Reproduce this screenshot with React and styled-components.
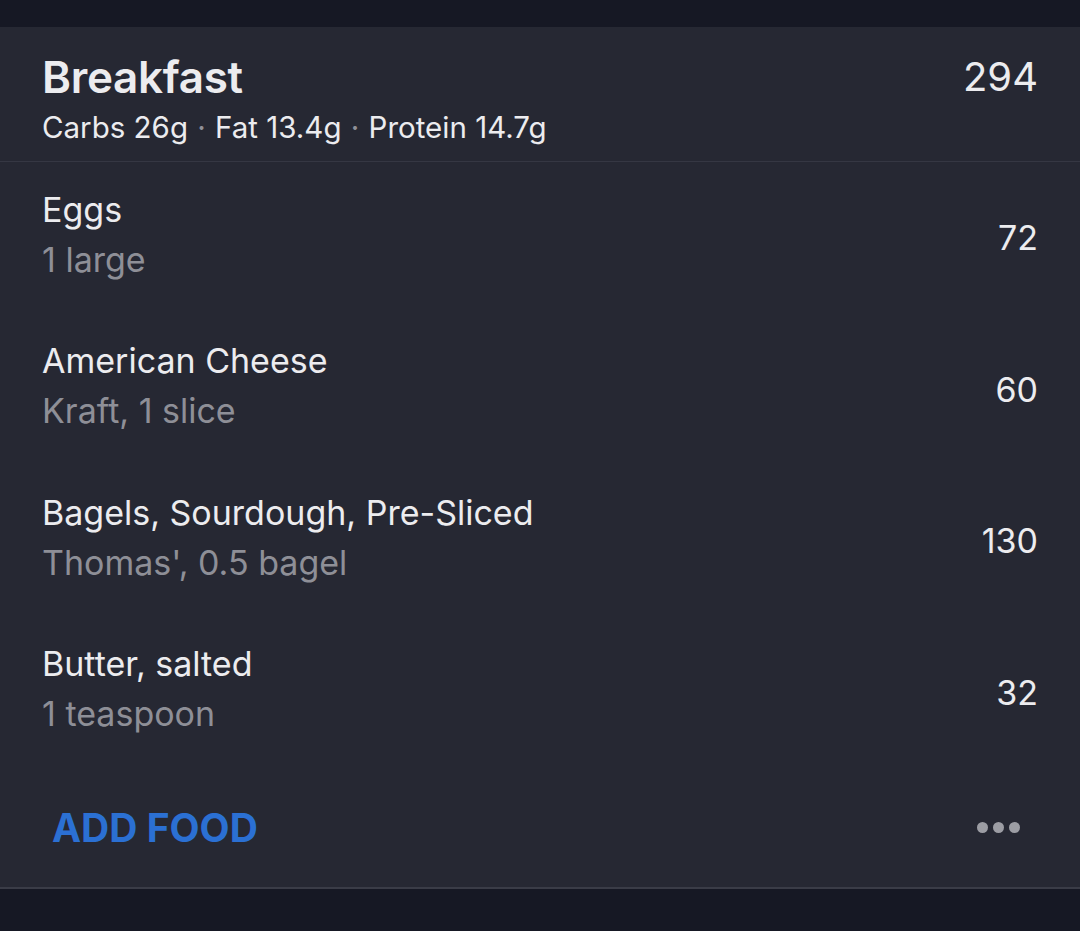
import React from "react";
import styled, { createGlobalStyle } from "styled-components";

const foods = [
  { name: "Eggs", detail: "1 large", cal: 72 },
  { name: "American Cheese", detail: "Kraft, 1 slice", cal: 60 },
  { name: "Bagels, Sourdough, Pre-Sliced", detail: "Thomas', 0.5 bagel", cal: 130 },
  { name: "Butter, salted", detail: "1 teaspoon", cal: 32 },
];

const App = () => {
  return (
    <>
      <GlobalStyle />
      <Page>
        <Card>
          <Header>
            <HeaderText>
              <MealTitle>Breakfast</MealTitle>
              <Macros>
                Carbs 26g <Dot>·</Dot> Fat 13.4g <Dot>·</Dot> Protein 14.7g
              </Macros>
            </HeaderText>
            <MealTotal>294</MealTotal>
          </Header>
          <List>
            {foods.map((f) => (
              <FoodRow key={f.name}>
                <FoodText>
                  <FoodName>{f.name}</FoodName>
                  <FoodDetail>{f.detail}</FoodDetail>
                </FoodText>
                <FoodCal>{f.cal}</FoodCal>
              </FoodRow>
            ))}
          </List>
          <Footer>
            <AddButton>ADD FOOD</AddButton>
            <More aria-label="more">
              <span />
              <span />
              <span />
            </More>
          </Footer>
        </Card>
      </Page>
    </>
  );
};

const GlobalStyle = createGlobalStyle`
  html, body {
    margin: 0;
    padding: 0;
    background: #161824;
  }
  body {
    font-family: Inter, "Liberation Sans", sans-serif;
    -webkit-font-smoothing: antialiased;
  }
`;

const Page = styled.div`
  width: 1080px;
  height: 931px;
  padding-top: 27px;
  box-sizing: border-box;
  background: #161824;
`;

const Card = styled.div`
  background: #262833;
  border-bottom: 2px solid #3a3c47;
`;

const Header = styled.div`
  display: flex;
  justify-content: space-between;
  align-items: flex-start;
  padding: 24px 42px 0 42px;
  height: 135px;
  box-sizing: border-box;
  border-bottom: 1px solid #353743;
`;

const HeaderText = styled.div`
  display: flex;
  flex-direction: column;
`;

const MealTitle = styled.div`
  font-size: 44px;
  font-weight: 600;
  color: #ececef;
  line-height: 52px;
  letter-spacing: -0.3px;
`;

const Macros = styled.div`
  font-size: 29.5px;
  color: #ececef;
  line-height: 48px;
`;

const Dot = styled.span`
  color: #8f9098;
  margin: 0 1px;
`;

const MealTotal = styled.div`
  font-size: 40px;
  color: #ececef;
  line-height: 52px;
`;

const List = styled.div`
  display: flex;
  flex-direction: column;
`;

const FoodRow = styled.div`
  display: flex;
  align-items: center;
  justify-content: space-between;
  height: 151.5px;
  padding: 0 42px;
  box-sizing: border-box;
`;

const FoodText = styled.div`
  display: flex;
  flex-direction: column;
  padding-bottom: 6px;
`;

const FoodName = styled.div`
  font-size: 34px;
  color: #ececef;
  line-height: 50px;
`;

const FoodDetail = styled.div`
  font-size: 34px;
  color: #8e8f97;
  line-height: 50px;
`;

const FoodCal = styled.div`
  font-size: 34px;
  color: #ececef;
`;

const Footer = styled.div`
  display: flex;
  align-items: center;
  justify-content: space-between;
  height: 119px;
  padding: 0 60px 0 52px;
  box-sizing: border-box;
`;

const AddButton = styled.button`
  background: none;
  border: none;
  padding: 0;
  font-family: Inter, "Liberation Sans", sans-serif;
  font-size: 39px;
  font-weight: 700;
  color: #2b70d3;
  cursor: pointer;
`;

const More = styled.div`
  display: flex;
  gap: 5px;
  span {
    width: 11px;
    height: 11px;
    border-radius: 50%;
    background: #9c9da4;
  }
`;

export default App;
